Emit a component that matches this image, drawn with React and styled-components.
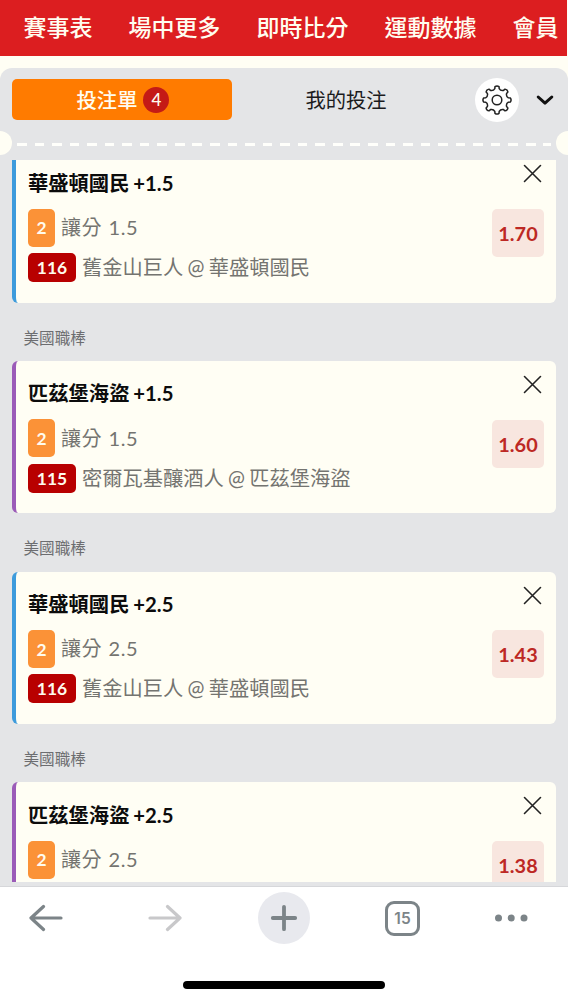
import React from "react";
import styled, { createGlobalStyle } from "styled-components";

const cream = "#fffef4";
const panelGrey = "#e4e5e7";

const GlobalStyle = createGlobalStyle`
  *, *::before, *::after { box-sizing: border-box; }
  body {
    margin: 0;
    background: #fff;
    font-family: Lato, "Noto Sans CJK TC", sans-serif;
  }
  button { font: inherit; border: 0; padding: 0; background: none; color: inherit; }
  svg { display: block; }
`;

const Page = styled.div`
  display: flex;
  flex-direction: column;
  width: 568px;
  height: 1000px;
  overflow: hidden;
  background: ${cream};
`;

const TopNav = styled.nav`
  flex: none;
  display: flex;
  align-items: center;
  gap: 36px;
  height: 56px;
  margin-right: 1px;
  padding: 0 0 2px 23.5px;
  overflow: hidden;
  background: #dc1e20;
`;

const NavItem = styled.a`
  flex: none;
  color: #fffdf0;
  font-size: 23px;
  font-weight: 500;
  line-height: 30px;
  white-space: nowrap;
`;

const Panel = styled.main`
  flex: 1;
  min-height: 0;
  display: flex;
  flex-direction: column;
  margin-top: 12px;
  padding-bottom: 4px;
  border-radius: 12px 12px 0 0;
  background: ${panelGrey};
`;

const PanelHeader = styled.header`
  flex: none;
  display: flex;
  align-items: center;
  height: 63px;
  padding: 0 14px 0 12px;
`;

const Tab = styled.button`
  display: flex;
  align-items: center;
  justify-content: center;
  gap: 6px;
  width: 220px;
  height: 41px;
  padding-left: ${(p) => (p.$active ? "2px" : 0)};
  border-radius: 5px;
  background: ${(p) => (p.$active ? "#ff7b00" : "transparent")};
  color: ${(p) => (p.$active ? "#fffdf0" : "#1b1b1d")};
  font-size: 20.3px;
  font-weight: ${(p) => (p.$active ? 500 : 400)};
  line-height: 30px;
`;

const SecondTab = styled(Tab)`
  width: 228px;
`;

const Count = styled.span`
  display: flex;
  align-items: center;
  justify-content: center;
  width: 26px;
  height: 26px;
  border-radius: 50%;
  background: #c41a16;
  font-size: 17px;
`;

const GearButton = styled.button`
  display: flex;
  align-items: center;
  justify-content: center;
  width: 44px;
  height: 44px;
  margin-left: 15px;
  border-radius: 50%;
  background: #fff;
`;

const CollapseButton = styled.button`
  display: flex;
  margin: 1px 0 0 17px;
`;

const Perforation = styled.div`
  flex: none;
  display: flex;
  align-items: center;
  justify-content: space-between;
  height: 24px;
  overflow: hidden;
`;

const Notch = styled.span`
  flex: none;
  width: 12px;
  height: 24px;
  background: ${cream};
  border-radius: ${(p) => (p.$right ? "12px 0 0 12px" : "0 12px 12px 0")};
`;

const Dashes = styled.div`
  width: 534px;
  height: 3px;
  margin: 3px 5px 0;
  background: repeating-linear-gradient(90deg, #fffffb 0 9.6px, transparent 9.6px 17.55px);
`;

const BetList = styled.section`
  flex: 1;
  min-height: 0;
  margin-top: 5px;
  padding: 0 12px;
  overflow: hidden;
`;

const BetScroll = styled.div`
  margin-top: -9.6px;
`;

const League = styled.h3`
  margin: 0;
  height: 58.3px;
  padding: 10px 0 0 11.5px;
  color: #6c6d70;
  font-size: 15.6px;
  font-weight: 400;
  line-height: 50px;
`;

const BetCard = styled.article`
  display: flex;
  justify-content: space-between;
  height: 152.3px;
  padding: 0 12px;
  border-left: 4px solid ${(p) => p.$accent};
  border-radius: 6px;
  background: ${cream};
`;

const BetInfo = styled.div`
  padding-top: 17.4px;
`;

const Selection = styled.h2`
  margin: 0 0 11.1px;
  color: #0c0c0c;
  font-size: 20.3px;
  font-weight: 700;
  line-height: 30px;
  word-spacing: -1px;
`;

const Line = styled.div`
  display: flex;
  align-items: center;
  gap: 6px;
  height: ${(p) => p.$height}px;
  margin-bottom: 6.2px;
`;

const Tag = styled.span`
  display: flex;
  align-items: center;
  justify-content: center;
  width: ${(p) => (p.$code ? 48 : 27)}px;
  height: 100%;
  border-radius: 5px;
  background: ${(p) => (p.$code ? "#b80000" : "#fb9237")};
  color: #fffbee;
  font-size: 17.4px;
  font-weight: 700;
`;

const Detail = styled.span`
  position: relative;
  top: -0.6px;
  color: #747470;
  font-size: ${(p) => (p.$wide ? 20 : 20.25)}px;
  font-weight: 400;
  line-height: 28px;
  letter-spacing: ${(p) => (p.$wide ? "0.5px" : 0)};
  word-spacing: ${(p) => (p.$wide ? "1px" : "-0.9px")};
  white-space: nowrap;
`;

const BetSide = styled.div`
  display: flex;
  flex-direction: column;
  align-items: flex-end;
  padding-top: 14px;
`;

const RemoveButton = styled.button`
  margin: 0 2.5px 25.6px 0;
`;

const Odds = styled.div`
  width: 52px;
  height: 48px;
  border-radius: 5px;
  background: #f8e6df;
  color: #bd2824;
  font-size: 19.9px;
  font-weight: 700;
  line-height: 48px;
  text-align: center;
`;

const BrowserBar = styled.footer`
  flex: none;
  height: 114px;
  border-top: 1px solid #d6d7da;
  background: #fff;
`;

const BrowserActions = styled.div`
  display: grid;
  grid-template-columns: 119px 110px 127px 109px 34px;
  align-items: center;
  height: 62px;
  padding-left: 29px;
  color: #7c8488;
`;

const NewTab = styled.button`
  display: flex;
  align-items: center;
  justify-content: center;
  width: 52px;
  height: 52px;
  border-radius: 50%;
  background: #e8e9ee;
`;

const TabCount = styled.button`
  width: 35px;
  height: 35px;
  border: 3px solid #7c8488;
  border-radius: 9px;
  font-family: Inter, sans-serif;
  font-size: 15.5px;
  font-weight: 600;
  line-height: 29px;
  text-align: center;
`;

const HomeIndicator = styled.div`
  width: 202px;
  height: 8px;
  margin: 32px auto 0;
  border-radius: 4px;
  background: #000;
`;

const gearPath = (() => {
  const pts = [];
  for (let i = 0; i < 8; i += 1) {
    const a = (i * Math.PI) / 4 - Math.PI / 2;
    const at = (r, d) =>
      `${(15 + r * Math.cos(a + d)).toFixed(2)} ${(15 + r * Math.sin(a + d)).toFixed(2)}`;
    pts.push(
      `${i ? "L" : "M"}${at(11.6, -0.19)} L${at(13.5, -0.15)} Q${at(14.8, 0)} ${at(13.5, 0.15)} L${at(11.6, 0.19)} Q${at(9.6, Math.PI / 8)} ${at(11.6, Math.PI / 4 - 0.19)}`
    );
  }
  return `${pts.join(" ")} Z`;
})();

const GearIcon = () => (
  <svg width="30" height="30" viewBox="0 0 30 30" fill="none" stroke="#222" strokeWidth="1.5" strokeLinejoin="round">
    <path d={gearPath} />
    <circle cx="15" cy="15" r="4.8" />
  </svg>
);

const ChevronIcon = () => (
  <svg width="18" height="12" viewBox="0 0 18 12" fill="none" stroke="#111" strokeWidth="3" strokeLinecap="round" strokeLinejoin="round">
    <path d="M2.2 3 9 9.2 15.8 3" />
  </svg>
);

const CloseIcon = () => (
  <svg width="19" height="19" viewBox="0 0 19 19" fill="none" stroke="#222" strokeWidth="1.6" strokeLinecap="round">
    <path d="M1.5 1.5 17.5 17.5M17.5 1.5 1.5 17.5" />
  </svg>
);

const ArrowIcon = ({ forward }) => (
  <svg width="34" height="30" viewBox="0 0 34 30" fill="none" stroke={forward ? "#c8c8ca" : "#7c8488"} strokeWidth="3.2" strokeLinecap="round" strokeLinejoin="round">
    <path d={forward ? "M2 15H32M19.5 3.5 32 15 19.5 26.5" : "M32 15H2M14.5 3.5 2 15 14.5 26.5"} />
  </svg>
);

const PlusIcon = () => (
  <svg width="28" height="28" viewBox="0 0 28 28" stroke="#7c8488" strokeWidth="3.8" strokeLinecap="round">
    <path d="M14 2.8V25.2M2.8 14H25.2" />
  </svg>
);

const DotsIcon = () => (
  <svg width="34" height="8" viewBox="0 0 34 8" fill="#7c8488">
    <circle cx="4.5" cy="4" r="3.5" />
    <circle cx="17.2" cy="4" r="3.5" />
    <circle cx="30" cy="4" r="3.5" />
  </svg>
);

const navItems = ["賽事表", "場中更多", "即時比分", "運動數據", "會員"];

const blue = "#3d9bdc";
const purple = "#9b5bb8";
const nationals = { team: "華盛頓國民", code: "116", match: "舊金山巨人 @ 華盛頓國民", accent: blue };
const pirates = { team: "匹茲堡海盜", code: "115", match: "密爾瓦基釀酒人 @ 匹茲堡海盜", accent: purple };

const bets = [
  { ...nationals, spread: "1.5", odds: "1.70" },
  { ...pirates, spread: "1.5", odds: "1.60", league: "美國職棒" },
  { ...nationals, spread: "2.5", odds: "1.43", league: "美國職棒" },
  { team: "匹茲堡海盜", accent: purple, spread: "2.5", odds: "1.38", league: "美國職棒" },
];

const Bet = ({ league, team, code, match, accent, spread, odds }) => (
  <>
    {league && <League>{league}</League>}
    <BetCard $accent={accent}>
      <BetInfo>
        <Selection>{`${team} +${spread}`}</Selection>
        <Line $height={38}>
          <Tag>2</Tag>
          <Detail $wide>{`讓分 ${spread}`}</Detail>
        </Line>
        {match && (
          <Line $height={29}>
            <Tag $code>{code}</Tag>
            <Detail>{match}</Detail>
          </Line>
        )}
      </BetInfo>
      <BetSide>
        <RemoveButton aria-label="移除">
          <CloseIcon />
        </RemoveButton>
        <Odds>{odds}</Odds>
      </BetSide>
    </BetCard>
  </>
);

export default function App() {
  return (
    <>
      <GlobalStyle />
      <Page>
        <TopNav>
          {navItems.map((item) => (
            <NavItem key={item}>{item}</NavItem>
          ))}
        </TopNav>
        <Panel>
          <PanelHeader>
            <Tab $active>
              投注單<Count>4</Count>
            </Tab>
            <SecondTab>我的投注</SecondTab>
            <GearButton aria-label="設定">
              <GearIcon />
            </GearButton>
            <CollapseButton aria-label="收合">
              <ChevronIcon />
            </CollapseButton>
          </PanelHeader>
          <Perforation>
            <Notch />
            <Dashes />
            <Notch $right />
          </Perforation>
          <BetList>
            <BetScroll>
              {bets.map((bet) => (
                <Bet key={bet.odds} {...bet} />
              ))}
            </BetScroll>
          </BetList>
        </Panel>
        <BrowserBar>
          <BrowserActions>
            <ArrowIcon />
            <ArrowIcon forward />
            <NewTab aria-label="新分頁">
              <PlusIcon />
            </NewTab>
            <TabCount>15</TabCount>
            <DotsIcon />
          </BrowserActions>
          <HomeIndicator />
        </BrowserBar>
      </Page>
    </>
  );
}
